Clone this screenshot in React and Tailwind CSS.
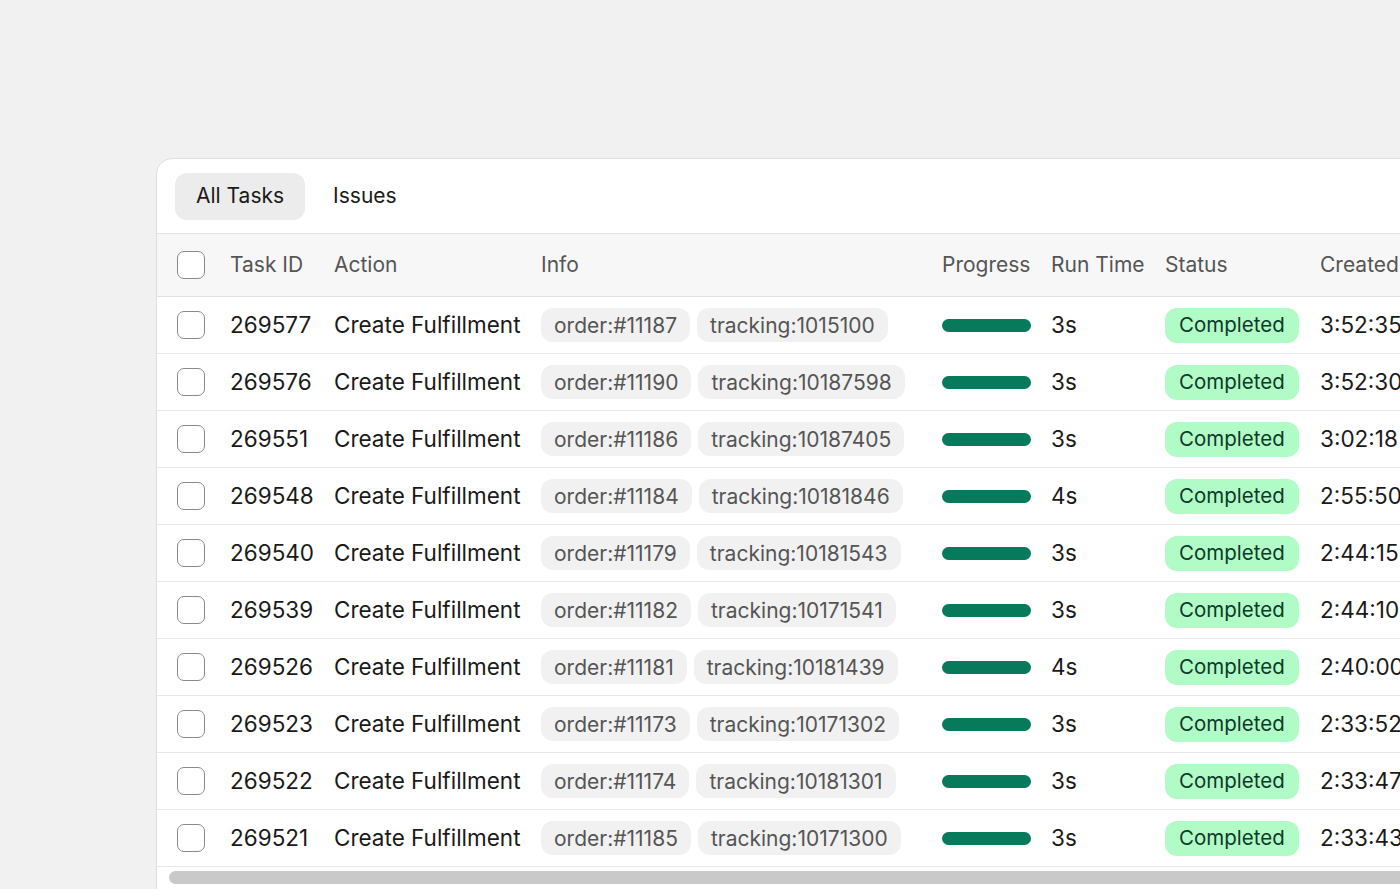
import React from 'react';

const rows = [
  { id: '269577', order: '11187', tracking: '1015100', run: '3s', created: '3:52:35' },
  { id: '269576', order: '11190', tracking: '10187598', run: '3s', created: '3:52:30' },
  { id: '269551', order: '11186', tracking: '10187405', run: '3s', created: '3:02:18' },
  { id: '269548', order: '11184', tracking: '10181846', run: '4s', created: '2:55:50' },
  { id: '269540', order: '11179', tracking: '10181543', run: '3s', created: '2:44:15' },
  { id: '269539', order: '11182', tracking: '10171541', run: '3s', created: '2:44:10' },
  { id: '269526', order: '11181', tracking: '10181439', run: '4s', created: '2:40:00' },
  { id: '269523', order: '11173', tracking: '10171302', run: '3s', created: '2:33:52' },
  { id: '269522', order: '11174', tracking: '10181301', run: '3s', created: '2:33:47' },
  { id: '269521', order: '11185', tracking: '10171300', run: '3s', created: '2:33:43' },
];

const Checkbox = () => (
  <span className="block w-[28px] h-[28px] rounded-[7px] border-[1.5px] border-[#8a8a8a] bg-white" />
);

const Chip = ({ children }) => (
  <span className="inline-flex items-center h-[34px] pt-[1px] px-[13px] rounded-[12px] bg-[#f1f1f1] text-[#555555] whitespace-nowrap">
    {children}
  </span>
);

export default function App() {
  return (
    <div
      className="w-[1400px] h-[889px] overflow-hidden bg-[#f1f1f1] pt-[158px] pl-[156px]"
      style={{ fontFamily: 'Inter, "Noto Sans", sans-serif' }}
    >
      <div className="w-[1300px] h-[760px] bg-white border border-[#dedede] rounded-tl-[16px] overflow-hidden text-[22.5px]">
        {/* tabs */}
        <div className="flex items-center gap-[8px] h-[75px] px-[18px] border-b border-[#e2e2e2] text-[21px]">
          <button className="h-[47px] px-[21px] rounded-[12px] bg-[#ececec] text-[#1a1a1a]">All Tasks</button>
          <button className="h-[47px] px-[20px] rounded-[12px] text-[#1a1a1a]">Issues</button>
        </div>

        {/* header */}
        <div className="flex items-center h-[63px] bg-[#f7f7f7] border-b border-[#e2e2e2] text-[#555555] text-[21px]">
          <div className="w-[73px] pl-[20px]"><Checkbox /></div>
          <div className="w-[104px]">Task ID</div>
          <div className="w-[207px]">Action</div>
          <div className="w-[401px]">Info</div>
          <div className="w-[109px]">Progress</div>
          <div className="w-[114px]">Run Time</div>
          <div className="w-[155px]">Status</div>
          <div className="flex-1 whitespace-nowrap">Created</div>
        </div>

        {/* rows */}
        {rows.map((r) => (
          <div key={r.id} className="flex items-center h-[57px] border-b border-[#e6e6e6] text-[#1a1a1a]">
            <div className="w-[73px] pl-[20px]"><Checkbox /></div>
            <div className="w-[104px]">{r.id}</div>
            <div className="w-[207px] whitespace-nowrap">Create Fulfillment</div>
            <div className="w-[401px] flex gap-[7px] text-[21px]">
              <Chip>order:#{r.order}</Chip>
              <Chip>tracking:{r.tracking}</Chip>
            </div>
            <div className="w-[109px]">
              <div className="w-[89px] h-[13px] rounded-full bg-[#077a5b]" />
            </div>
            <div className="w-[114px]">{r.run}</div>
            <div className="w-[155px]">
              <span className="inline-flex items-center h-[35px] pt-[1px] px-[14px] rounded-[12px] bg-[#b1fbc7] text-[#0d3a27] text-[20.5px]">
                Completed
              </span>
            </div>
            <div className="flex-1 whitespace-nowrap">{r.created}</div>
          </div>
        ))}

        {/* scrollbar */}
        <div className="pt-[4px] pl-[12px]">
          <div className="h-[13px] rounded-full bg-[#c9c9c9]" />
        </div>
      </div>
    </div>
  );
}
